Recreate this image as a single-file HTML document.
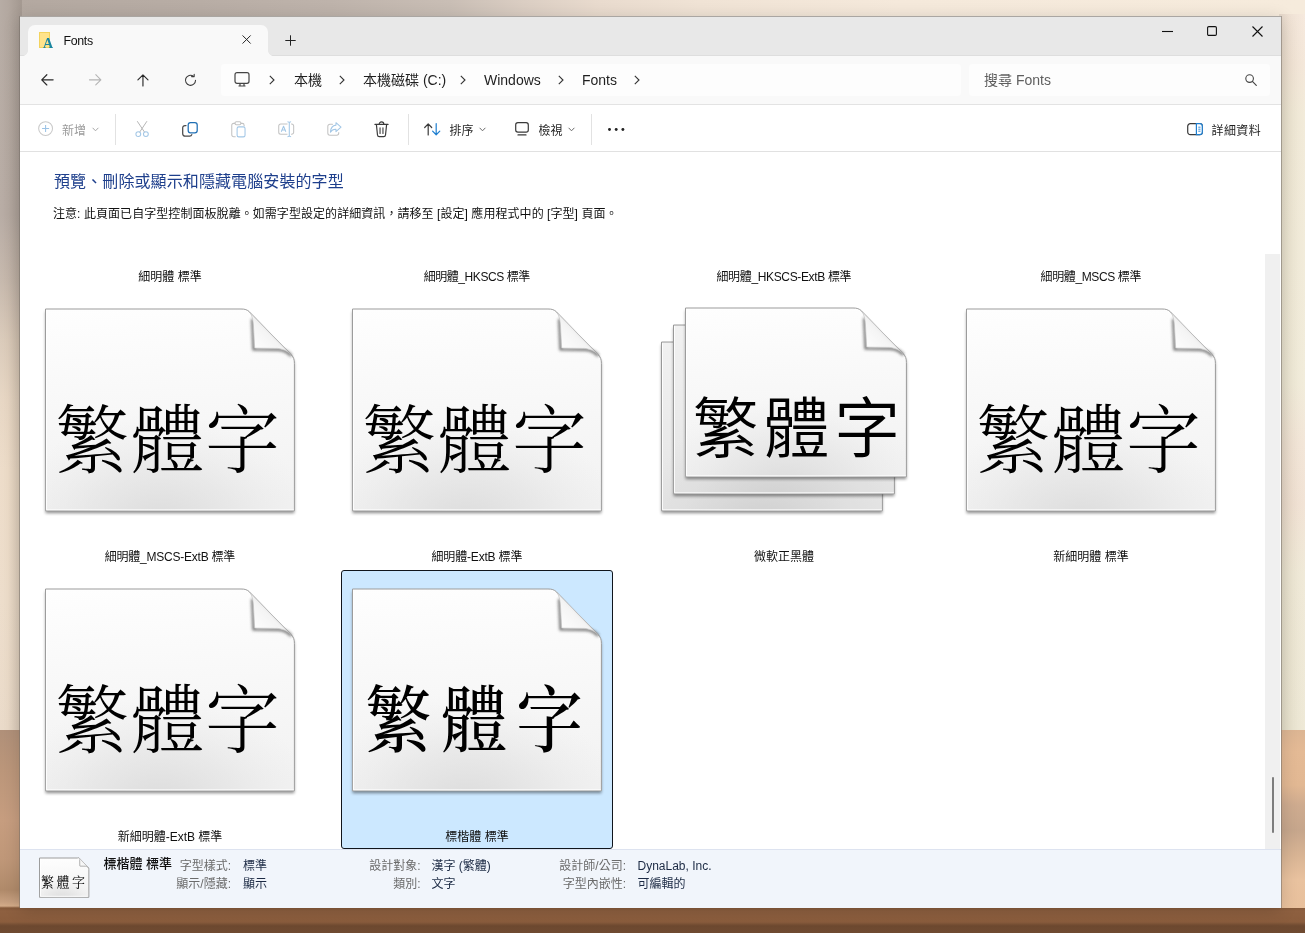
<!DOCTYPE html>
<html lang="zh-Hant">
<head>
<meta charset="utf-8">
<title>Fonts</title>
<style>
*{box-sizing:border-box;margin:0;padding:0}
html,body{width:1305px;height:933px;overflow:hidden}
body{position:relative;font-family:"Liberation Sans","Noto Sans CJK TC",sans-serif;font-size:12px;color:#1b1b1b;background:#e9dccb}
.abs{position:absolute}
/* ---------- wallpaper ---------- */
#wall{left:0;top:0;width:1305px;height:730px;
 background:linear-gradient(to right,#b3a8a0 0px,#b8ada5 200px,#beb3ab 330px,#c9beb5 450px,#dbcec3 525px,#e9dbce 600px,#f0e3d5 700px,#f5e9db 900px,#f6ebdc 1305px)}
#wallL{left:0;top:0;width:22px;height:730px;background:linear-gradient(to right,rgba(255,255,255,.05) 0,rgba(0,0,0,0) 8px,rgba(40,30,20,.10) 20px),linear-gradient(to bottom,#b3a8a0 0,#b5a9a1 215px,#c4b6aa 280px,#d9c9b8 340px,#e6d5c2 400px,#ecdbc7 470px,#ecdcc9 600px,#e9d9c7 730px)}
#wallR{left:1279px;top:14px;width:26px;height:716px;background:linear-gradient(to right,rgba(60,55,30,.09) 0,rgba(60,55,30,.03) 10px,rgba(255,255,255,.10) 26px),linear-gradient(to bottom,#f5e7da 0,#f3e5d6 50px,#f1e9d6 100px,#f1ebd8 370px,#f2e4d5 430px,#f1e1d2 490px,#efe8d5 560px,#ede7d3 716px)}
#wood{left:0;top:730px;width:1305px;height:203px;
 background:linear-gradient(to bottom,#b09079 0,#bb967a 40px,#c69d7f 90px,#bf9778 130px,#b08a6a 160px,#c7a080 172px,#d3ab88 176px,#85593a 178px,#8e6040 181px,#8b5d3d 192px,#7a5236 194px,#6d4930 196px,#6f4a31 203px)}
#woodR{left:1281px;top:730px;width:24px;height:178px;background:linear-gradient(to bottom,#dcb593 0,#e4ba95 22px,#e2b893 55px,#ceab8f 75px,#c6a68c 100px,#d8b494 125px,#e9c29f 150px,#e8c09c 178px)}
/* ---------- window ---------- */
#win{left:20px;top:16px;width:1261px;height:892px;background:#fff;will-change:transform;box-shadow:0 3px 16px rgba(0,0,0,.16)}
#win .bd{position:absolute;background:rgba(118,112,104,.55)}
#titlebar{left:0;top:0;width:1261px;height:40px;background:#e8e8e8;border-bottom:1px solid #dedede}
#tab{left:8px;top:9px;width:240px;height:31px;background:#f9f9f9;border-radius:7px 7px 0 0}
#tab:before,#tab:after{content:"";position:absolute;bottom:0;width:5px;height:5px}
#tab:before{left:-5px;background:radial-gradient(circle at 0 0,rgba(0,0,0,0) 4.5px,#f9f9f9 5px)}
#tab:after{right:-5px;background:radial-gradient(circle at 100% 0,rgba(0,0,0,0) 4.5px,#f9f9f9 5px)}
#navbar{left:0;top:40px;width:1261px;height:49px;background:#f9f9f9;border-bottom:1px solid #e3e3e3}
#addr{left:201px;top:48px;width:740px;height:32px;background:#fdfdfd;border-radius:4px}
#search{left:949px;top:48px;width:301px;height:32px;background:#fdfdfd;border-radius:4px}
#toolbar{left:0;top:89px;width:1261px;height:47px;background:#fff;border-bottom:1px solid #e1e1e1}
#content{left:0;top:136px;width:1261px;height:698px;background:#fff}
#details{left:0;top:833px;width:1261px;height:59px;background:#f1f5fb;border-top:1px solid #dde3f0}
#scroll{left:1245px;top:238px;width:15px;height:596px;background:#f0f0f0}
#thumb{left:1252px;top:761px;width:2px;height:56px;background:#7d7d7d;border-radius:1px}

/* ---------- text + icons ---------- */
.t{position:absolute;white-space:nowrap;line-height:20px;height:20px}
.ic{position:absolute;overflow:visible}
svg{overflow:visible}
.nav14{font-size:14px;color:#1f1f1f}
.tb12{font-size:12px;color:#1f1f1f}
.sep{position:absolute;width:1px;height:31px;top:98px;background:#e2e2e2}

.lbl{position:absolute;width:272px;text-align:center;font-size:12px;line-height:16px;height:16px;color:#111;white-space:nowrap}
.pg{position:absolute;overflow:visible}
.pv{position:absolute;white-space:nowrap;color:#000;text-align:center}
.ming{font-family:"Noto Serif CJK SC","Noto Serif CJK TC","Noto Serif CJK JP",serif;font-weight:300}
.hei{font-family:"Noto Sans CJK TC","Noto Sans CJK SC",sans-serif;font-weight:350}
.kai{font-family:"Noto Serif CJK SC","Noto Serif CJK TC","Noto Serif CJK JP",serif;font-weight:500}
#sel{position:absolute;left:321px;top:554px;width:272px;height:279px;background:#cce8ff;border:1px solid #10151c;border-radius:3px}
.dl{position:absolute;font-size:12px;line-height:18px;height:18px;white-space:nowrap;color:#6b6b6b;text-align:right}
.dv{position:absolute;font-size:12px;line-height:18px;height:18px;white-space:nowrap;color:#1c2a44}

</style>
</head>
<body>
<div id="wall" class="abs"></div>
<div id="wallL" class="abs"></div>
<div id="wallR" class="abs"></div>
<div id="wood" class="abs"></div>
<div id="woodR" class="abs"></div>

<div id="win" class="abs">
 <div id="titlebar" class="abs"></div>
 <div class="bd" style="left:-1px;top:0;width:1263px;height:1px"></div><div class="bd" style="left:-1px;top:1px;width:1px;height:891px"></div><div class="bd" style="left:1261px;top:1px;width:1px;height:891px"></div>
 <div id="tab" class="abs"></div>
 <div id="navbar" class="abs"></div>
 <div id="addr" class="abs"></div>
 <div id="search" class="abs"></div>
 <div id="toolbar" class="abs"></div>

 <!-- tab -->
 <svg class="ic" style="left:19px;top:16px" width="14" height="16" viewBox="0 0 14 16"><rect x="0.5" y="0.5" width="10" height="15" fill="#ffe38b" stroke="#f3d35e"/><text x="4" y="15.6" font-family="Liberation Serif,serif" font-weight="bold" font-size="14" fill="#1a86a0">A</text></svg>
 <div class="t" style="left:43.4px;top:15px;font-size:12.4px;letter-spacing:-0.3px;color:#111">Fonts</div>
 <svg class="ic" style="left:222px;top:19px" width="9.2" height="9" viewBox="0 0 10 10"><path d="M0.5 0.5 L9.5 9.5 M9.5 0.5 L0.5 9.5" stroke="#222" stroke-width="1.1" fill="none"/></svg>
 <svg class="ic" style="left:265px;top:19px" width="11" height="11" viewBox="0 0 11 11"><path d="M5.5 0.3 V10.7 M0.3 5.5 H10.7" stroke="#222" stroke-width="1" fill="none"/></svg>
 <!-- window controls -->
 <svg class="ic" style="left:1142px;top:15px" width="11" height="2" viewBox="0 0 11 2"><path d="M0 0.5 H11" stroke="#111" stroke-width="1.1"/></svg>
 <svg class="ic" style="left:1187px;top:10px" width="10" height="10" viewBox="0 0 10 10"><rect x="0.6" y="0.6" width="8.8" height="8.8" rx="1.2" fill="none" stroke="#111" stroke-width="1.1"/></svg>
 <svg class="ic" style="left:1232px;top:10px" width="11" height="11" viewBox="0 0 11 11"><path d="M0.5 0.5 L10.5 10.5 M10.5 0.5 L0.5 10.5" stroke="#111" stroke-width="1.1" fill="none"/></svg>
 <!-- nav buttons -->
 <svg class="ic" style="left:20.8px;top:57.8px" width="12.6" height="11.7" viewBox="0 0 14 13"><path d="M13.5 6.5 H1 M6.5 0.8 L0.8 6.5 L6.5 12.2" stroke="#2a2a2a" stroke-width="1.3" fill="none" stroke-linecap="round" stroke-linejoin="round"/></svg>
 <svg class="ic" style="left:68.8px;top:57.8px" width="12.6" height="11.7" viewBox="0 0 14 13"><path d="M0.5 6.5 H13 M7.5 0.8 L13.2 6.5 L7.5 12.2" stroke="#b4b4b4" stroke-width="1.2" fill="none" stroke-linecap="round" stroke-linejoin="round"/></svg>
 <svg class="ic" style="left:116.6px;top:57.8px" width="11.9" height="12.4" viewBox="0 0 13 14"><path d="M6.5 13.5 V1 M0.8 6.7 L6.5 1 L12.2 6.7" stroke="#2a2a2a" stroke-width="1.3" fill="none" stroke-linecap="round" stroke-linejoin="round"/></svg>
 <svg class="ic" style="left:164.4px;top:57.5px" width="13" height="12.6" viewBox="0 0 14 14"><path d="M12.6 7 A5.6 5.6 0 1 1 10.2 2.4" stroke="#3a3a3a" stroke-width="1.2" fill="none" stroke-linecap="round"/><path d="M8.2 2.9 H11.1 V0.2" stroke="#3a3a3a" stroke-width="1.2" fill="none" stroke-linecap="round" stroke-linejoin="round"/></svg>
 <!-- address -->
 <svg class="ic" style="left:214px;top:56px" width="16" height="15" viewBox="0 0 16 15"><rect x="1" y="0.7" width="14" height="10.6" rx="2" fill="none" stroke="#444" stroke-width="1.2"/><path d="M4.5 14 H11.5 M6 11.5 V14 M10 11.5 V14" stroke="#444" stroke-width="1.2" fill="none"/></svg>
 <svg class="ic chev" style="left:249px;top:59px" width="6" height="10" viewBox="0 0 6 10"><path d="M0.8 0.8 L5 5 L0.8 9.2" stroke="#333" stroke-width="1.1" fill="none"/></svg>
 <div class="t nav14" style="left:274px;top:54px">本機</div>
 <svg class="ic chev" style="left:319px;top:59px" width="6" height="10" viewBox="0 0 6 10"><path d="M0.8 0.8 L5 5 L0.8 9.2" stroke="#333" stroke-width="1.1" fill="none"/></svg>
 <div class="t nav14" style="left:343px;top:54px">本機磁碟 (C:)</div>
 <svg class="ic chev" style="left:440px;top:59px" width="6" height="10" viewBox="0 0 6 10"><path d="M0.8 0.8 L5 5 L0.8 9.2" stroke="#333" stroke-width="1.1" fill="none"/></svg>
 <div class="t nav14" style="left:464px;top:54px">Windows</div>
 <svg class="ic chev" style="left:538px;top:59px" width="6" height="10" viewBox="0 0 6 10"><path d="M0.8 0.8 L5 5 L0.8 9.2" stroke="#333" stroke-width="1.1" fill="none"/></svg>
 <div class="t nav14" style="left:562px;top:54px">Fonts</div>
 <svg class="ic chev" style="left:614px;top:59px" width="6" height="10" viewBox="0 0 6 10"><path d="M0.8 0.8 L5 5 L0.8 9.2" stroke="#333" stroke-width="1.1" fill="none"/></svg>
 <div class="t nav14" style="left:964px;top:54px;color:#5f5f5f">搜尋 Fonts</div>
 <svg class="ic" style="left:1225px;top:58px" width="12" height="12" viewBox="0 0 12 12"><circle cx="4.6" cy="4.6" r="3.8" fill="none" stroke="#444" stroke-width="1.1"/><path d="M7.4 7.4 L11.3 11.3" stroke="#444" stroke-width="1.2" stroke-linecap="round"/></svg>

 <div id="content" class="abs"></div>

 <!-- toolbar -->
<svg class="ic" style="left:17.9px;top:104.9px" width="15.2" height="15.2" viewBox="0 0 16 16"><circle cx="8" cy="8" r="7.3" fill="none" stroke="#c9c9c9" stroke-width="1.1"/><path d="M8 4.3 V11.7 M4.3 8 H11.7" stroke="#9cc3e6" stroke-width="1.1"/></svg>
<div class="t tb12" style="left:42px;top:105px;color:#9b9b9b">新增</div>
<svg class="ic" style="left:72px;top:110.6px" width="7" height="5" viewBox="0 0 7 5"><path d="M0.6 0.8 L3.5 3.8 L6.4 0.8" stroke="#a8a8a8" stroke-width="1" fill="none"/></svg>
<div class="sep" style="left:95px"></div>
<svg class="ic" style="left:115px;top:104.9px" width="14.2" height="16.2" viewBox="0 0 15 17"><path d="M2.6 0.5 L10 11.6 M12.4 0.5 L5 11.6" stroke="#b5b5b5" stroke-width="1.05" fill="none" stroke-linecap="round"/><circle cx="3.5" cy="13.8" r="2.55" fill="none" stroke="#a3c7e6" stroke-width="1.1"/><circle cx="11.5" cy="13.8" r="2.55" fill="none" stroke="#a3c7e6" stroke-width="1.1"/></svg>
<svg class="ic" style="left:162px;top:105.8px" width="16" height="15" viewBox="0 0 16 15"><rect x="6.2" y="0.65" width="9" height="10.2" rx="2.3" fill="#fff" stroke="#1f6fb4" stroke-width="1.25"/><path d="M4 3.6 H2.9 A2.2 2.2 0 0 0 0.7 5.8 V11.8 A2.4 2.4 0 0 0 3.1 14.2 H7.6 A2.2 2.2 0 0 0 9.8 12.6" fill="none" stroke="#4a4a4a" stroke-width="1.25" stroke-linecap="round"/></svg>
<svg class="ic" style="left:210.6px;top:104.6px" width="14.8" height="16.6" viewBox="0 0 16 18"><path d="M4.4 2.6 H2.8 A2 2 0 0 0 0.8 4.6 V15 A2 2 0 0 0 2.8 17 H5" fill="none" stroke="#c3c3c3" stroke-width="1.15"/><path d="M10.6 2.6 H12.2 A2 2 0 0 1 14.2 4.6 V5.6" fill="none" stroke="#c3c3c3" stroke-width="1.15"/><rect x="4.4" y="0.8" width="6.2" height="3.2" rx="1.2" fill="none" stroke="#c3c3c3" stroke-width="1.15"/><rect x="6.6" y="6.4" width="8.6" height="10.8" rx="1.8" fill="none" stroke="#a3c7e6" stroke-width="1.15"/></svg>
<svg class="ic" style="left:257.8px;top:104.7px" width="16.4" height="16.4" viewBox="0 0 18 18"><path d="M10.4 3.4 H3 A2.2 2.2 0 0 0 0.8 5.6 V12.4 A2.2 2.2 0 0 0 3 14.6 H10.4 M14.4 3.4 H15 A2.2 2.2 0 0 1 17.2 5.6 V12.4 A2.2 2.2 0 0 1 15 14.6 H14.4" fill="none" stroke="#c3c3c3" stroke-width="1.15"/><path d="M12.4 1.2 V16.8 M10.4 0.8 Q12.4 0.8 12.4 2 Q12.4 0.8 14.4 0.8 M10.4 17.2 Q12.4 17.2 12.4 16 Q12.4 17.2 14.4 17.2" fill="none" stroke="#a3c7e6" stroke-width="1.15"/><path d="M3.6 11.8 L6.1 5.8 L8.6 11.8 M4.5 9.8 H7.7" fill="none" stroke="#a3c7e6" stroke-width="1.15" stroke-linejoin="round"/></svg>
<svg class="ic" style="left:306.8px;top:106.2px" width="15" height="13.9" viewBox="0 0 17 16"><path d="M6.2 2.6 H3.2 A2.4 2.4 0 0 0 0.8 5 V12.8 A2.4 2.4 0 0 0 3.2 15.2 H11 A2.4 2.4 0 0 0 13.4 12.8 V12" fill="none" stroke="#c3c3c3" stroke-width="1.2" stroke-linecap="round"/><path d="M10.2 0.8 L16 6 L10.2 11.2 V8.4 C7 8.2 5.2 9.4 3.8 11.8 C4 7.4 6.4 4 10.2 3.6 Z" fill="none" stroke="#a3c7e6" stroke-width="1.2" stroke-linejoin="round"/></svg>
<svg class="ic" style="left:354.4px;top:104.6px" width="15" height="16.4" viewBox="0 0 16 18"><path d="M0.8 3.8 H15.2 M5.4 3.6 A2.6 2.6 0 0 1 10.6 3.6" fill="none" stroke="#3a3a3a" stroke-width="1.3" stroke-linecap="round"/><path d="M2.4 4 L3.6 15.4 A2 2 0 0 0 5.6 17.2 H10.4 A2 2 0 0 0 12.4 15.4 L13.6 4" fill="none" stroke="#3a3a3a" stroke-width="1.3"/><path d="M6.4 7.4 V13.6 M9.6 7.4 V13.6" stroke="#3a3a3a" stroke-width="1.2" stroke-linecap="round"/></svg>
<div class="sep" style="left:388px"></div>
<svg class="ic" style="left:404.4px;top:106.6px" width="17.2" height="12.6" viewBox="0 0 17.2 12.6"><path d="M4.2 12 V1 M0.7 4.5 L4.2 0.9 L7.7 4.5" fill="none" stroke="#3a3a3a" stroke-width="1.2" stroke-linecap="round" stroke-linejoin="round"/><path d="M12.2 0.6 V11.6 M8.6 8.1 L12.2 11.8 L15.8 8.1" fill="none" stroke="#1f7fd0" stroke-width="1.2" stroke-linecap="round" stroke-linejoin="round"/></svg>
<div class="t tb12" style="left:429.5px;top:105px;">排序</div>
<svg class="ic" style="left:458.5px;top:110.6px" width="7" height="5" viewBox="0 0 7 5"><path d="M0.6 0.8 L3.5 3.8 L6.4 0.8" stroke="#6a6a6a" stroke-width="1" fill="none"/></svg>
<svg class="ic" style="left:495px;top:106.3px" width="14" height="13.6" viewBox="0 0 14 13.6"><rect x="0.7" y="0.7" width="12.6" height="9.4" rx="2.2" fill="none" stroke="#3a3a3a" stroke-width="1.2"/><path d="M3 12.9 H11" stroke="#3a3a3a" stroke-width="1.2" stroke-linecap="round"/></svg>
<div class="t tb12" style="left:518.5px;top:105px;">檢視</div>
<svg class="ic" style="left:547.5px;top:110.6px" width="7" height="5" viewBox="0 0 7 5"><path d="M0.6 0.8 L3.5 3.8 L6.4 0.8" stroke="#6a6a6a" stroke-width="1" fill="none"/></svg>
<div class="sep" style="left:571px"></div>
<svg class="ic" style="left:587.8px;top:112.1px" width="16.4" height="3" viewBox="0 0 16.4 3"><circle cx="1.5" cy="1.5" r="1.45" fill="#222"/><circle cx="8.2" cy="1.5" r="1.45" fill="#222"/><circle cx="14.9" cy="1.5" r="1.45" fill="#222"/></svg>
<svg class="ic" style="left:1167px;top:106.8px" width="16" height="12.4" viewBox="0 0 16 12.4"><rect x="0.7" y="0.7" width="14.6" height="11" rx="2.6" fill="none" stroke="#3a3a3a" stroke-width="1.2"/><path d="M9.4 0.7 H12.7 A2.6 2.6 0 0 1 15.3 3.3 V9.1 A2.6 2.6 0 0 1 12.7 11.7 H9.4 Z" fill="#fff" stroke="#1f7fd0" stroke-width="1.2"/><path d="M11.3 4.2 H13.5 M11.3 6.2 H13.5 M11.3 8.2 H13.5" stroke="#1f7fd0" stroke-width="0.9"/></svg>
<div class="t tb12" style="left:1191.5px;top:105px;letter-spacing:0.4px;">詳細資料</div>
 <!-- heading -->
 <div class="t" id="hd" style="left:34px;top:155.5px;font-size:16px;letter-spacing:0.1px;color:#1e3f8c">預覽、刪除或顯示和隱藏電腦安裝的字型</div>
 <div class="t" id="note" style="left:33px;top:187.5px;letter-spacing:0.06px;font-size:12px;color:#111">注意: 此頁面已自字型控制面板脫離。如需字型設定的詳細資訊，請移至 [設定] 應用程式中的 [字型] 頁面。</div>

 <div id="sel"></div>
<div class="lbl" style="left:14px;top:252.5px">細明體 標準</div>
<div class="lbl" style="left:320.79px;top:252.5px;letter-spacing:-0.42px">細明體_HKSCS 標準</div>
<div class="lbl" style="left:627.825px;top:252.5px;letter-spacing:-0.35px">細明體_HKSCS-ExtB 標準</div>
<div class="lbl" style="left:934.815px;top:252.5px;letter-spacing:-0.37px">細明體_MSCS 標準</div>
<div class="lbl" style="left:13.89px;top:532.5px;letter-spacing:-0.22px">細明體_MSCS-ExtB 標準</div>
<div class="lbl" style="left:320.91px;top:532.5px;letter-spacing:-0.18px">細明體-ExtB 標準</div>
<div class="lbl" style="left:628px;top:532.5px">微軟正黑體</div>
<div class="lbl" style="left:935px;top:532.5px">新細明體 標準</div>
<div class="lbl" style="left:14px;top:812.5px">新細明體-ExtB 標準</div>
<div class="lbl" style="left:321px;top:812.5px">標楷體 標準</div>
<svg class="pg" style="left:25px;top:292px" width="250" height="203" viewBox="0 0 250 203"><defs><linearGradient id="p1g" x1="0" y1="0" x2="0.05" y2="1"><stop offset="0" stop-color="#fefefe"/><stop offset="0.4" stop-color="#f9f9f9"/><stop offset="1" stop-color="#f2f2f2"/></linearGradient><radialGradient id="p1h" cx="0.46" cy="1.08" r="0.62" gradientTransform="translate(0.46 1.08) scale(1 0.9) translate(-0.46 -1.08)"><stop offset="0" stop-color="#d9d9d9" stop-opacity="0.95"/><stop offset="0.5" stop-color="#dedede" stop-opacity="0.5"/><stop offset="1" stop-color="#e6e6e6" stop-opacity="0"/></radialGradient><linearGradient id="p1f" x1="0.1" y1="0.9" x2="0.75" y2="0.25"><stop offset="0" stop-color="#ffffff"/><stop offset="0.55" stop-color="#f4f4f4"/><stop offset="1" stop-color="#c9c9c9"/></linearGradient><filter id="p1b" x="-30%" y="-30%" width="160%" height="160%"><feGaussianBlur stdDeviation="1.5"/></filter><filter id="p1s" x="-10%" y="-10%" width="120%" height="130%"><feGaussianBlur stdDeviation="1.7"/></filter></defs><path d="M0.5,1 H196.00 C200.00,1 202.00,1.60 204.50,4.00 L246.50,47.00 C248.60,49.40 249.40,51.50 249.40,55.50 V202.80 H0.5 Z" transform="translate(0,2.5)" fill="#000" opacity="0.42" filter="url(#p1s)"/><path d="M0.5,1 H196.00 C200.00,1 202.00,1.60 204.50,4.00 L246.50,47.00 C248.60,49.40 249.40,51.50 249.40,55.50 V202.80 H0.5 Z" fill="url(#p1g)" stroke="#9c9c9c" stroke-width="1"/><path d="M0.5,1 H196.00 C200.00,1 202.00,1.60 204.50,4.00 L246.50,47.00 C248.60,49.40 249.40,51.50 249.40,55.50 V202.80 H0.5 Z" fill="url(#p1h)"/><path d="M1.5,2.2 V201.80 H248.80" fill="none" stroke="#fff" stroke-width="1" opacity="0.85"/><path d="M207.40,11.00 L208.70,41.20 L234.00,41.60 C240.00,42.20 243.50,44.60 246.40,47.80" fill="none" stroke="#333" stroke-width="2.6" opacity="0.7" filter="url(#p1b)"/><path d="M203.00,2.60 C206.20,5.40 207.80,9.50 208.40,16.50 L209.70,40.10 L232.50,40.40 C239.50,41.20 243.20,43.60 246.60,47.20 Z" fill="url(#p1f)" stroke="#bdbdbd" stroke-width="0.6"/></svg>
<div class="pv ming" style="left:-52.5px;top:344px;width:400px;height:150px;line-height:150px;font-size:75px;letter-spacing:0px;">繁體字</div>
<svg class="pg" style="left:332px;top:292px" width="250" height="203" viewBox="0 0 250 203"><defs><linearGradient id="p2g" x1="0" y1="0" x2="0.05" y2="1"><stop offset="0" stop-color="#fefefe"/><stop offset="0.4" stop-color="#f9f9f9"/><stop offset="1" stop-color="#f2f2f2"/></linearGradient><radialGradient id="p2h" cx="0.46" cy="1.08" r="0.62" gradientTransform="translate(0.46 1.08) scale(1 0.9) translate(-0.46 -1.08)"><stop offset="0" stop-color="#d9d9d9" stop-opacity="0.95"/><stop offset="0.5" stop-color="#dedede" stop-opacity="0.5"/><stop offset="1" stop-color="#e6e6e6" stop-opacity="0"/></radialGradient><linearGradient id="p2f" x1="0.1" y1="0.9" x2="0.75" y2="0.25"><stop offset="0" stop-color="#ffffff"/><stop offset="0.55" stop-color="#f4f4f4"/><stop offset="1" stop-color="#c9c9c9"/></linearGradient><filter id="p2b" x="-30%" y="-30%" width="160%" height="160%"><feGaussianBlur stdDeviation="1.5"/></filter><filter id="p2s" x="-10%" y="-10%" width="120%" height="130%"><feGaussianBlur stdDeviation="1.7"/></filter></defs><path d="M0.5,1 H196.00 C200.00,1 202.00,1.60 204.50,4.00 L246.50,47.00 C248.60,49.40 249.40,51.50 249.40,55.50 V202.80 H0.5 Z" transform="translate(0,2.5)" fill="#000" opacity="0.42" filter="url(#p2s)"/><path d="M0.5,1 H196.00 C200.00,1 202.00,1.60 204.50,4.00 L246.50,47.00 C248.60,49.40 249.40,51.50 249.40,55.50 V202.80 H0.5 Z" fill="url(#p2g)" stroke="#9c9c9c" stroke-width="1"/><path d="M0.5,1 H196.00 C200.00,1 202.00,1.60 204.50,4.00 L246.50,47.00 C248.60,49.40 249.40,51.50 249.40,55.50 V202.80 H0.5 Z" fill="url(#p2h)"/><path d="M1.5,2.2 V201.80 H248.80" fill="none" stroke="#fff" stroke-width="1" opacity="0.85"/><path d="M207.40,11.00 L208.70,41.20 L234.00,41.60 C240.00,42.20 243.50,44.60 246.40,47.80" fill="none" stroke="#333" stroke-width="2.6" opacity="0.7" filter="url(#p2b)"/><path d="M203.00,2.60 C206.20,5.40 207.80,9.50 208.40,16.50 L209.70,40.10 L232.50,40.40 C239.50,41.20 243.20,43.60 246.60,47.20 Z" fill="url(#p2f)" stroke="#bdbdbd" stroke-width="0.6"/></svg>
<div class="pv ming" style="left:254.5px;top:344px;width:400px;height:150px;line-height:150px;font-size:75px;letter-spacing:0px;">繁體字</div>
<svg class="pg" style="left:640.5px;top:324.5px" width="222" height="170" viewBox="0 0 222 170"><defs><linearGradient id="p3g" x1="0" y1="0" x2="0.05" y2="1"><stop offset="0" stop-color="#fefefe"/><stop offset="0.4" stop-color="#f9f9f9"/><stop offset="1" stop-color="#f2f2f2"/></linearGradient><radialGradient id="p3h" cx="0.46" cy="1.08" r="0.62" gradientTransform="translate(0.46 1.08) scale(1 0.9) translate(-0.46 -1.08)"><stop offset="0" stop-color="#d9d9d9" stop-opacity="0.95"/><stop offset="0.5" stop-color="#dedede" stop-opacity="0.5"/><stop offset="1" stop-color="#e6e6e6" stop-opacity="0"/></radialGradient><linearGradient id="p3f" x1="0.1" y1="0.9" x2="0.75" y2="0.25"><stop offset="0" stop-color="#ffffff"/><stop offset="0.55" stop-color="#f4f4f4"/><stop offset="1" stop-color="#c9c9c9"/></linearGradient><filter id="p3b" x="-30%" y="-30%" width="160%" height="160%"><feGaussianBlur stdDeviation="1.5"/></filter><filter id="p3s" x="-10%" y="-10%" width="120%" height="130%"><feGaussianBlur stdDeviation="1.7"/></filter></defs><path d="M0.5,1 H168.00 C172.00,1 174.00,1.60 176.50,4.00 L218.50,47.00 C220.60,49.40 221.40,51.50 221.40,55.50 V169.80 H0.5 Z" transform="translate(0,2.5)" fill="#000" opacity="0.42" filter="url(#p3s)"/><path d="M0.5,1 H168.00 C172.00,1 174.00,1.60 176.50,4.00 L218.50,47.00 C220.60,49.40 221.40,51.50 221.40,55.50 V169.80 H0.5 Z" fill="url(#p3g)" stroke="#9c9c9c" stroke-width="1"/><path d="M0.5,1 H168.00 C172.00,1 174.00,1.60 176.50,4.00 L218.50,47.00 C220.60,49.40 221.40,51.50 221.40,55.50 V169.80 H0.5 Z" fill="url(#p3h)"/><path d="M0.5,1 H168.00 C172.00,1 174.00,1.60 176.50,4.00 L218.50,47.00 C220.60,49.40 221.40,51.50 221.40,55.50 V169.80 H0.5 Z" fill="#000" opacity="0.05"/><path d="M1.5,2.2 V168.80 H220.80" fill="none" stroke="#fff" stroke-width="1" opacity="0.85"/></svg>
<svg class="pg" style="left:652.5px;top:307.5px" width="222" height="170" viewBox="0 0 222 170"><defs><linearGradient id="p4g" x1="0" y1="0" x2="0.05" y2="1"><stop offset="0" stop-color="#fefefe"/><stop offset="0.4" stop-color="#f9f9f9"/><stop offset="1" stop-color="#f2f2f2"/></linearGradient><radialGradient id="p4h" cx="0.46" cy="1.08" r="0.62" gradientTransform="translate(0.46 1.08) scale(1 0.9) translate(-0.46 -1.08)"><stop offset="0" stop-color="#d9d9d9" stop-opacity="0.95"/><stop offset="0.5" stop-color="#dedede" stop-opacity="0.5"/><stop offset="1" stop-color="#e6e6e6" stop-opacity="0"/></radialGradient><linearGradient id="p4f" x1="0.1" y1="0.9" x2="0.75" y2="0.25"><stop offset="0" stop-color="#ffffff"/><stop offset="0.55" stop-color="#f4f4f4"/><stop offset="1" stop-color="#c9c9c9"/></linearGradient><filter id="p4b" x="-30%" y="-30%" width="160%" height="160%"><feGaussianBlur stdDeviation="1.5"/></filter><filter id="p4s" x="-10%" y="-10%" width="120%" height="130%"><feGaussianBlur stdDeviation="1.7"/></filter></defs><path d="M0.5,1 H168.00 C172.00,1 174.00,1.60 176.50,4.00 L218.50,47.00 C220.60,49.40 221.40,51.50 221.40,55.50 V169.80 H0.5 Z" transform="translate(0,2.5)" fill="#000" opacity="0.42" filter="url(#p4s)"/><path d="M0.5,1 H168.00 C172.00,1 174.00,1.60 176.50,4.00 L218.50,47.00 C220.60,49.40 221.40,51.50 221.40,55.50 V169.80 H0.5 Z" fill="url(#p4g)" stroke="#9c9c9c" stroke-width="1"/><path d="M0.5,1 H168.00 C172.00,1 174.00,1.60 176.50,4.00 L218.50,47.00 C220.60,49.40 221.40,51.50 221.40,55.50 V169.80 H0.5 Z" fill="url(#p4h)"/><path d="M0.5,1 H168.00 C172.00,1 174.00,1.60 176.50,4.00 L218.50,47.00 C220.60,49.40 221.40,51.50 221.40,55.50 V169.80 H0.5 Z" fill="#000" opacity="0.05"/><path d="M1.5,2.2 V168.80 H220.80" fill="none" stroke="#fff" stroke-width="1" opacity="0.85"/></svg>
<svg class="pg" style="left:664.5px;top:291px" width="222" height="170" viewBox="0 0 222 170"><defs><linearGradient id="p5g" x1="0" y1="0" x2="0.05" y2="1"><stop offset="0" stop-color="#fefefe"/><stop offset="0.4" stop-color="#f9f9f9"/><stop offset="1" stop-color="#f2f2f2"/></linearGradient><radialGradient id="p5h" cx="0.46" cy="1.08" r="0.62" gradientTransform="translate(0.46 1.08) scale(1 0.9) translate(-0.46 -1.08)"><stop offset="0" stop-color="#d9d9d9" stop-opacity="0.95"/><stop offset="0.5" stop-color="#dedede" stop-opacity="0.5"/><stop offset="1" stop-color="#e6e6e6" stop-opacity="0"/></radialGradient><linearGradient id="p5f" x1="0.1" y1="0.9" x2="0.75" y2="0.25"><stop offset="0" stop-color="#ffffff"/><stop offset="0.55" stop-color="#f4f4f4"/><stop offset="1" stop-color="#c9c9c9"/></linearGradient><filter id="p5b" x="-30%" y="-30%" width="160%" height="160%"><feGaussianBlur stdDeviation="1.5"/></filter><filter id="p5s" x="-10%" y="-10%" width="120%" height="130%"><feGaussianBlur stdDeviation="1.7"/></filter></defs><path d="M0.5,1 H168.00 C172.00,1 174.00,1.60 176.50,4.00 L218.50,47.00 C220.60,49.40 221.40,51.50 221.40,55.50 V169.80 H0.5 Z" transform="translate(0,2.5)" fill="#000" opacity="0.42" filter="url(#p5s)"/><path d="M0.5,1 H168.00 C172.00,1 174.00,1.60 176.50,4.00 L218.50,47.00 C220.60,49.40 221.40,51.50 221.40,55.50 V169.80 H0.5 Z" fill="url(#p5g)" stroke="#9c9c9c" stroke-width="1"/><path d="M0.5,1 H168.00 C172.00,1 174.00,1.60 176.50,4.00 L218.50,47.00 C220.60,49.40 221.40,51.50 221.40,55.50 V169.80 H0.5 Z" fill="url(#p5h)"/><path d="M1.5,2.2 V168.80 H220.80" fill="none" stroke="#fff" stroke-width="1" opacity="0.85"/><path d="M179.40,11.00 L180.70,41.20 L206.00,41.60 C212.00,42.20 215.50,44.60 218.40,47.80" fill="none" stroke="#333" stroke-width="2.6" opacity="0.7" filter="url(#p5b)"/><path d="M175.00,2.60 C178.20,5.40 179.80,9.50 180.40,16.50 L181.70,40.10 L204.50,40.40 C211.50,41.20 215.20,43.60 218.60,47.20 Z" fill="url(#p5f)" stroke="#bdbdbd" stroke-width="0.6"/></svg>
<div class="pv hei" style="left:578.9px;top:341px;width:400px;height:132px;line-height:132px;font-size:66px;letter-spacing:4.8px;">繁體字</div>
<svg class="pg" style="left:946px;top:292px" width="250" height="203" viewBox="0 0 250 203"><defs><linearGradient id="p6g" x1="0" y1="0" x2="0.05" y2="1"><stop offset="0" stop-color="#fefefe"/><stop offset="0.4" stop-color="#f9f9f9"/><stop offset="1" stop-color="#f2f2f2"/></linearGradient><radialGradient id="p6h" cx="0.46" cy="1.08" r="0.62" gradientTransform="translate(0.46 1.08) scale(1 0.9) translate(-0.46 -1.08)"><stop offset="0" stop-color="#d9d9d9" stop-opacity="0.95"/><stop offset="0.5" stop-color="#dedede" stop-opacity="0.5"/><stop offset="1" stop-color="#e6e6e6" stop-opacity="0"/></radialGradient><linearGradient id="p6f" x1="0.1" y1="0.9" x2="0.75" y2="0.25"><stop offset="0" stop-color="#ffffff"/><stop offset="0.55" stop-color="#f4f4f4"/><stop offset="1" stop-color="#c9c9c9"/></linearGradient><filter id="p6b" x="-30%" y="-30%" width="160%" height="160%"><feGaussianBlur stdDeviation="1.5"/></filter><filter id="p6s" x="-10%" y="-10%" width="120%" height="130%"><feGaussianBlur stdDeviation="1.7"/></filter></defs><path d="M0.5,1 H196.00 C200.00,1 202.00,1.60 204.50,4.00 L246.50,47.00 C248.60,49.40 249.40,51.50 249.40,55.50 V202.80 H0.5 Z" transform="translate(0,2.5)" fill="#000" opacity="0.42" filter="url(#p6s)"/><path d="M0.5,1 H196.00 C200.00,1 202.00,1.60 204.50,4.00 L246.50,47.00 C248.60,49.40 249.40,51.50 249.40,55.50 V202.80 H0.5 Z" fill="url(#p6g)" stroke="#9c9c9c" stroke-width="1"/><path d="M0.5,1 H196.00 C200.00,1 202.00,1.60 204.50,4.00 L246.50,47.00 C248.60,49.40 249.40,51.50 249.40,55.50 V202.80 H0.5 Z" fill="url(#p6h)"/><path d="M1.5,2.2 V201.80 H248.80" fill="none" stroke="#fff" stroke-width="1" opacity="0.85"/><path d="M207.40,11.00 L208.70,41.20 L234.00,41.60 C240.00,42.20 243.50,44.60 246.40,47.80" fill="none" stroke="#333" stroke-width="2.6" opacity="0.7" filter="url(#p6b)"/><path d="M203.00,2.60 C206.20,5.40 207.80,9.50 208.40,16.50 L209.70,40.10 L232.50,40.40 C239.50,41.20 243.20,43.60 246.60,47.20 Z" fill="url(#p6f)" stroke="#bdbdbd" stroke-width="0.6"/></svg>
<div class="pv ming" style="left:868.5px;top:344px;width:400px;height:150px;line-height:150px;font-size:75px;letter-spacing:0px;">繁體字</div>
<svg class="pg" style="left:25px;top:572px" width="250" height="203" viewBox="0 0 250 203"><defs><linearGradient id="p7g" x1="0" y1="0" x2="0.05" y2="1"><stop offset="0" stop-color="#fefefe"/><stop offset="0.4" stop-color="#f9f9f9"/><stop offset="1" stop-color="#f2f2f2"/></linearGradient><radialGradient id="p7h" cx="0.46" cy="1.08" r="0.62" gradientTransform="translate(0.46 1.08) scale(1 0.9) translate(-0.46 -1.08)"><stop offset="0" stop-color="#d9d9d9" stop-opacity="0.95"/><stop offset="0.5" stop-color="#dedede" stop-opacity="0.5"/><stop offset="1" stop-color="#e6e6e6" stop-opacity="0"/></radialGradient><linearGradient id="p7f" x1="0.1" y1="0.9" x2="0.75" y2="0.25"><stop offset="0" stop-color="#ffffff"/><stop offset="0.55" stop-color="#f4f4f4"/><stop offset="1" stop-color="#c9c9c9"/></linearGradient><filter id="p7b" x="-30%" y="-30%" width="160%" height="160%"><feGaussianBlur stdDeviation="1.5"/></filter><filter id="p7s" x="-10%" y="-10%" width="120%" height="130%"><feGaussianBlur stdDeviation="1.7"/></filter></defs><path d="M0.5,1 H196.00 C200.00,1 202.00,1.60 204.50,4.00 L246.50,47.00 C248.60,49.40 249.40,51.50 249.40,55.50 V202.80 H0.5 Z" transform="translate(0,2.5)" fill="#000" opacity="0.42" filter="url(#p7s)"/><path d="M0.5,1 H196.00 C200.00,1 202.00,1.60 204.50,4.00 L246.50,47.00 C248.60,49.40 249.40,51.50 249.40,55.50 V202.80 H0.5 Z" fill="url(#p7g)" stroke="#9c9c9c" stroke-width="1"/><path d="M0.5,1 H196.00 C200.00,1 202.00,1.60 204.50,4.00 L246.50,47.00 C248.60,49.40 249.40,51.50 249.40,55.50 V202.80 H0.5 Z" fill="url(#p7h)"/><path d="M1.5,2.2 V201.80 H248.80" fill="none" stroke="#fff" stroke-width="1" opacity="0.85"/><path d="M207.40,11.00 L208.70,41.20 L234.00,41.60 C240.00,42.20 243.50,44.60 246.40,47.80" fill="none" stroke="#333" stroke-width="2.6" opacity="0.7" filter="url(#p7b)"/><path d="M203.00,2.60 C206.20,5.40 207.80,9.50 208.40,16.50 L209.70,40.10 L232.50,40.40 C239.50,41.20 243.20,43.60 246.60,47.20 Z" fill="url(#p7f)" stroke="#bdbdbd" stroke-width="0.6"/></svg>
<div class="pv ming" style="left:-52.5px;top:624px;width:400px;height:150px;line-height:150px;font-size:75px;letter-spacing:0px;">繁體字</div>
<svg class="pg" style="left:332px;top:572px" width="250" height="203" viewBox="0 0 250 203"><defs><linearGradient id="p8g" x1="0" y1="0" x2="0.05" y2="1"><stop offset="0" stop-color="#fefefe"/><stop offset="0.4" stop-color="#f9f9f9"/><stop offset="1" stop-color="#f2f2f2"/></linearGradient><radialGradient id="p8h" cx="0.46" cy="1.08" r="0.62" gradientTransform="translate(0.46 1.08) scale(1 0.9) translate(-0.46 -1.08)"><stop offset="0" stop-color="#d9d9d9" stop-opacity="0.95"/><stop offset="0.5" stop-color="#dedede" stop-opacity="0.5"/><stop offset="1" stop-color="#e6e6e6" stop-opacity="0"/></radialGradient><linearGradient id="p8f" x1="0.1" y1="0.9" x2="0.75" y2="0.25"><stop offset="0" stop-color="#ffffff"/><stop offset="0.55" stop-color="#f4f4f4"/><stop offset="1" stop-color="#c9c9c9"/></linearGradient><filter id="p8b" x="-30%" y="-30%" width="160%" height="160%"><feGaussianBlur stdDeviation="1.5"/></filter><filter id="p8s" x="-10%" y="-10%" width="120%" height="130%"><feGaussianBlur stdDeviation="1.7"/></filter></defs><path d="M0.5,1 H196.00 C200.00,1 202.00,1.60 204.50,4.00 L246.50,47.00 C248.60,49.40 249.40,51.50 249.40,55.50 V202.80 H0.5 Z" transform="translate(0,2.5)" fill="#000" opacity="0.42" filter="url(#p8s)"/><path d="M0.5,1 H196.00 C200.00,1 202.00,1.60 204.50,4.00 L246.50,47.00 C248.60,49.40 249.40,51.50 249.40,55.50 V202.80 H0.5 Z" fill="url(#p8g)" stroke="#9c9c9c" stroke-width="1"/><path d="M0.5,1 H196.00 C200.00,1 202.00,1.60 204.50,4.00 L246.50,47.00 C248.60,49.40 249.40,51.50 249.40,55.50 V202.80 H0.5 Z" fill="url(#p8h)"/><path d="M1.5,2.2 V201.80 H248.80" fill="none" stroke="#fff" stroke-width="1" opacity="0.85"/><path d="M207.40,11.00 L208.70,41.20 L234.00,41.60 C240.00,42.20 243.50,44.60 246.40,47.80" fill="none" stroke="#333" stroke-width="2.6" opacity="0.7" filter="url(#p8b)"/><path d="M203.00,2.60 C206.20,5.40 207.80,9.50 208.40,16.50 L209.70,40.10 L232.50,40.40 C239.50,41.20 243.20,43.60 246.60,47.20 Z" fill="url(#p8f)" stroke="#bdbdbd" stroke-width="0.6"/></svg>
<div class="pv kai" style="left:258.25px;top:631.5px;width:400px;height:134px;line-height:134px;font-size:67px;letter-spacing:8.5px;transform:scaleY(1.08);">繁體字</div>
 <div id="scroll" class="abs"></div>
 <div id="thumb" class="abs"></div>
 <div id="details" class="abs"></div>
 <svg class="pg" style="left:18.5px;top:840.5px" width="50" height="40.5" viewBox="0 0 50 40.5"><defs><linearGradient id="p9g" x1="0" y1="0" x2="0.05" y2="1"><stop offset="0" stop-color="#fefefe"/><stop offset="0.4" stop-color="#f9f9f9"/><stop offset="1" stop-color="#f2f2f2"/></linearGradient><radialGradient id="p9h" cx="0.46" cy="1.08" r="0.62" gradientTransform="translate(0.46 1.08) scale(1 0.9) translate(-0.46 -1.08)"><stop offset="0" stop-color="#d9d9d9" stop-opacity="0.95"/><stop offset="0.5" stop-color="#dedede" stop-opacity="0.5"/><stop offset="1" stop-color="#e6e6e6" stop-opacity="0"/></radialGradient><linearGradient id="p9f" x1="0.1" y1="0.9" x2="0.75" y2="0.25"><stop offset="0" stop-color="#ffffff"/><stop offset="0.55" stop-color="#f4f4f4"/><stop offset="1" stop-color="#c9c9c9"/></linearGradient><filter id="p9b" x="-30%" y="-30%" width="160%" height="160%"><feGaussianBlur stdDeviation="1.5"/></filter><filter id="p9s" x="-10%" y="-10%" width="120%" height="130%"><feGaussianBlur stdDeviation="1.7"/></filter></defs><path d="M0.5,1 H38.12 C39.00,1 39.44,0.35 39.99,0.88 L49.23,10.34 C49.69,10.87 49.87,11.33 49.87,12.21 V40.30 H0.5 Z" fill="url(#p9g)" stroke="#9c9c9c" stroke-width="1"/><path d="M0.5,1 H38.12 C39.00,1 39.44,0.35 39.99,0.88 L49.23,10.34 C49.69,10.87 49.87,11.33 49.87,12.21 V40.30 H0.5 Z" fill="url(#p9h)"/><path d="M1.5,2.2 V39.30 H48.80" fill="none" stroke="#fff" stroke-width="1" opacity="0.85"/><path d="M40.63,2.42 L40.91,9.06 L46.48,9.15 C47.80,9.28 48.57,9.81 49.21,10.52" fill="none" stroke="#777" stroke-width="1" opacity="0.6"/><path d="M39.66,0.57 C40.36,1.19 40.72,2.09 40.85,3.63 L41.13,8.82 L46.15,8.89 C47.69,9.06 48.50,9.59 49.25,10.38 Z" fill="url(#p9f)" stroke="#bdbdbd" stroke-width="0.6"/></svg>
<div class="pv kai" style="left:19.3px;top:856.3px;width:50px;height:20px;line-height:20px;font-size:13px;letter-spacing:2.6px;font-weight:400;transform:scaleY(1.05)">繁體字</div>
<div class="dv" style="left:83.5px;top:839px;font-size:13px;font-weight:500;color:#111">標楷體 標準</div>
<div class="dl" style="left:91px;top:840.5px;width:120px">字型樣式:</div><div class="dv" style="left:223px;top:840.5px">標準</div>
<div class="dl" style="left:91px;top:858.5px;width:120px">顯示/隱藏:</div><div class="dv" style="left:223px;top:858.5px">顯示</div>
<div class="dl" style="left:280.5px;top:840.5px;width:120px">設計對象:</div><div class="dv" style="left:411.5px;top:840.5px">漢字 (繁體)</div>
<div class="dl" style="left:280.5px;top:858.5px;width:120px">類別:</div><div class="dv" style="left:411.5px;top:858.5px">文字</div>
<div class="dl" style="left:486px;top:840.5px;width:120px">設計師/公司:</div><div class="dv" style="left:617.5px;top:840.5px">DynaLab, Inc.</div>
<div class="dl" style="left:486px;top:858.5px;width:120px">字型內嵌性:</div><div class="dv" style="left:617.5px;top:858.5px">可編輯的</div>
</div>
</body>
</html>
